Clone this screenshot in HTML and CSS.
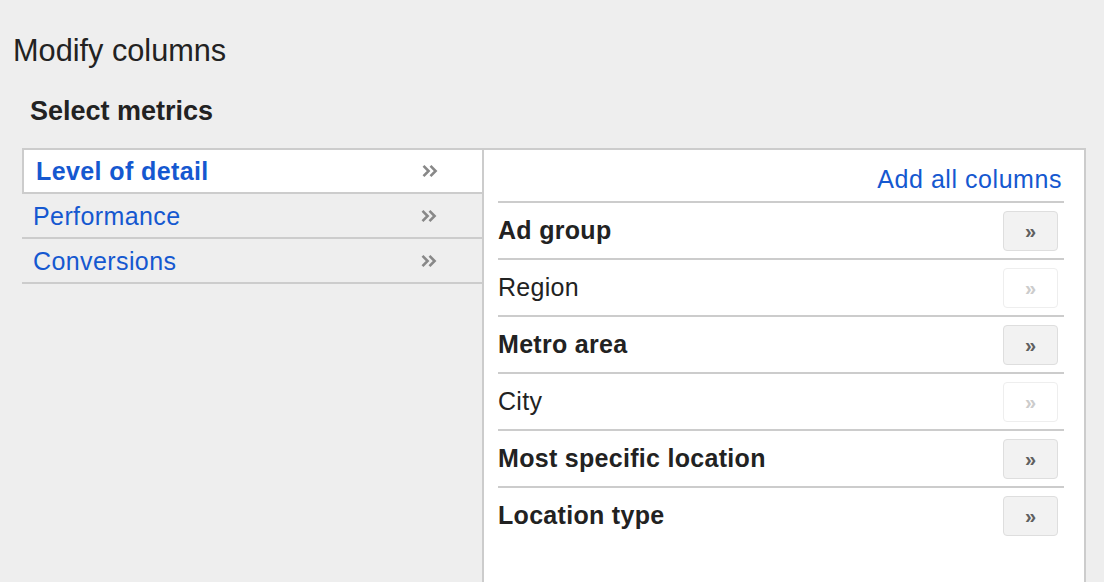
FILE: index.html
```html
<!DOCTYPE html>
<html>
<head>
<meta charset="utf-8">
<title>Modify columns</title>
<link rel="stylesheet" href="styles.css">
</head>
<body>
<div class="page">
  <h1 class="title">Modify columns</h1>
  <h2 class="subtitle">Select metrics</h2>
  <div class="panels">
    <ul class="categories">
      <li class="cat cat-selected"><span class="cat-label">Level of detail</span>
        <svg class="chev" width="16" height="14" viewBox="0 0 16 14"><path d="M1.5 1.8 L6.6 7 L1.5 12.2 M8.5 1.8 L13.6 7 L8.5 12.2" fill="none" stroke="#888888" stroke-width="2.6"/></svg>
      </li>
      <li class="cat"><span class="cat-label">Performance</span>
        <svg class="chev" width="16" height="14" viewBox="0 0 16 14"><path d="M1.5 1.8 L6.6 7 L1.5 12.2 M8.5 1.8 L13.6 7 L8.5 12.2" fill="none" stroke="#888888" stroke-width="2.6"/></svg>
      </li>
      <li class="cat"><span class="cat-label">Conversions</span>
        <svg class="chev" width="16" height="14" viewBox="0 0 16 14"><path d="M1.5 1.8 L6.6 7 L1.5 12.2 M8.5 1.8 L13.6 7 L8.5 12.2" fill="none" stroke="#888888" stroke-width="2.6"/></svg>
      </li>
    </ul>
    <div class="columns">
      <div class="columns-head"><a class="add-all">Add all columns</a></div>
      <ul class="metric-list">
        <li class="metric metric-strong"><span>Ad group</span><button class="add-btn">»</button></li>
        <li class="metric"><span>Region</span><button class="add-btn add-btn-off">»</button></li>
        <li class="metric metric-strong"><span>Metro area</span><button class="add-btn">»</button></li>
        <li class="metric"><span>City</span><button class="add-btn add-btn-off">»</button></li>
        <li class="metric metric-strong"><span>Most specific location</span><button class="add-btn">»</button></li>
        <li class="metric metric-strong"><span>Location type</span><button class="add-btn">»</button></li>
      </ul>
    </div>
  </div>
</div>
</body>
</html>
```
FILE: styles.css
```css
html, body {
  margin: 0;
  padding: 0;
  background: #eeeeee;
  overflow: hidden;
  height: 582px;
}
body {
  font-family: "Liberation Sans", Arial, sans-serif;
  color: #222222;
}
.page {
  padding-top: 33px;
}
.title {
  margin: 0 0 0 13px;
  font-size: 30.7px;
  line-height: 36px;
  font-weight: normal;
  color: #222222;
}
.subtitle {
  margin: 26px 0 0 30px;
  font-size: 27px;
  line-height: 32px;
  font-weight: bold;
  color: #222222;
}
.panels {
  display: flex;
  margin: 21px 0 0 22px;
  width: 1064px;
  align-items: flex-start;
}
.categories {
  list-style: none;
  margin: 0;
  padding: 0;
  width: 460px;
  flex: none;
}
.cat {
  display: flex;
  align-items: center;
  justify-content: space-between;
  height: 43px;
  padding: 0 45px 0 11px;
  border-bottom: 2px solid #cccccc;
  font-size: 25px;
  letter-spacing: 0.4px;
  color: #1558d0;
}
.cat .cat-label {
  padding-top: 2px;
}
.cat-selected {
  height: 42px;
  background: #ffffff;
  border: 2px solid #cccccc;
  border-right: none;
  font-weight: bold;
  padding-right: 44px;
}
.cat-selected .cat-label {
  padding-top: 0;
  padding-left: 1px;
}
.chev {
  display: block;
  flex: none;
}
.columns {
  flex: 1;
  background: #ffffff;
  border: 2px solid #cccccc;
  min-height: 460px;
  padding: 0 20px 0 14px;
}
.columns-head {
  height: 30px;
  padding: 14px 2px 7px 0;
  font-size: 25px;
  line-height: 30px;
  text-align: right;
  border-bottom: 2px solid #cccccc;
}
.add-all {
  letter-spacing: 0.55px;
  color: #1558d0;
  cursor: pointer;
}
.metric-list {
  list-style: none;
  margin: 0;
  padding: 0;
}
.metric {
  display: flex;
  align-items: center;
  justify-content: space-between;
  height: 55px;
  border-bottom: 2px solid #cccccc;
  font-size: 25px;
  letter-spacing: 0.3px;
  color: #222222;
}
.metric:last-child {
  border-bottom: none;
}
.metric-strong {
  font-weight: bold;
}
.add-btn {
  width: 55px;
  height: 40px;
  margin-right: 6px;
  padding: 0;
  background: #f2f2f2;
  border: 1.5px solid #dedede;
  border-radius: 4px;
  font-family: "Liberation Sans", Arial, sans-serif;
  font-size: 20px;
  font-weight: bold;
  line-height: 20px;
  color: #606060;
}
.add-btn-off {
  background: #ffffff;
  border-color: #eeeeee;
  color: #cccccc;
}
```
